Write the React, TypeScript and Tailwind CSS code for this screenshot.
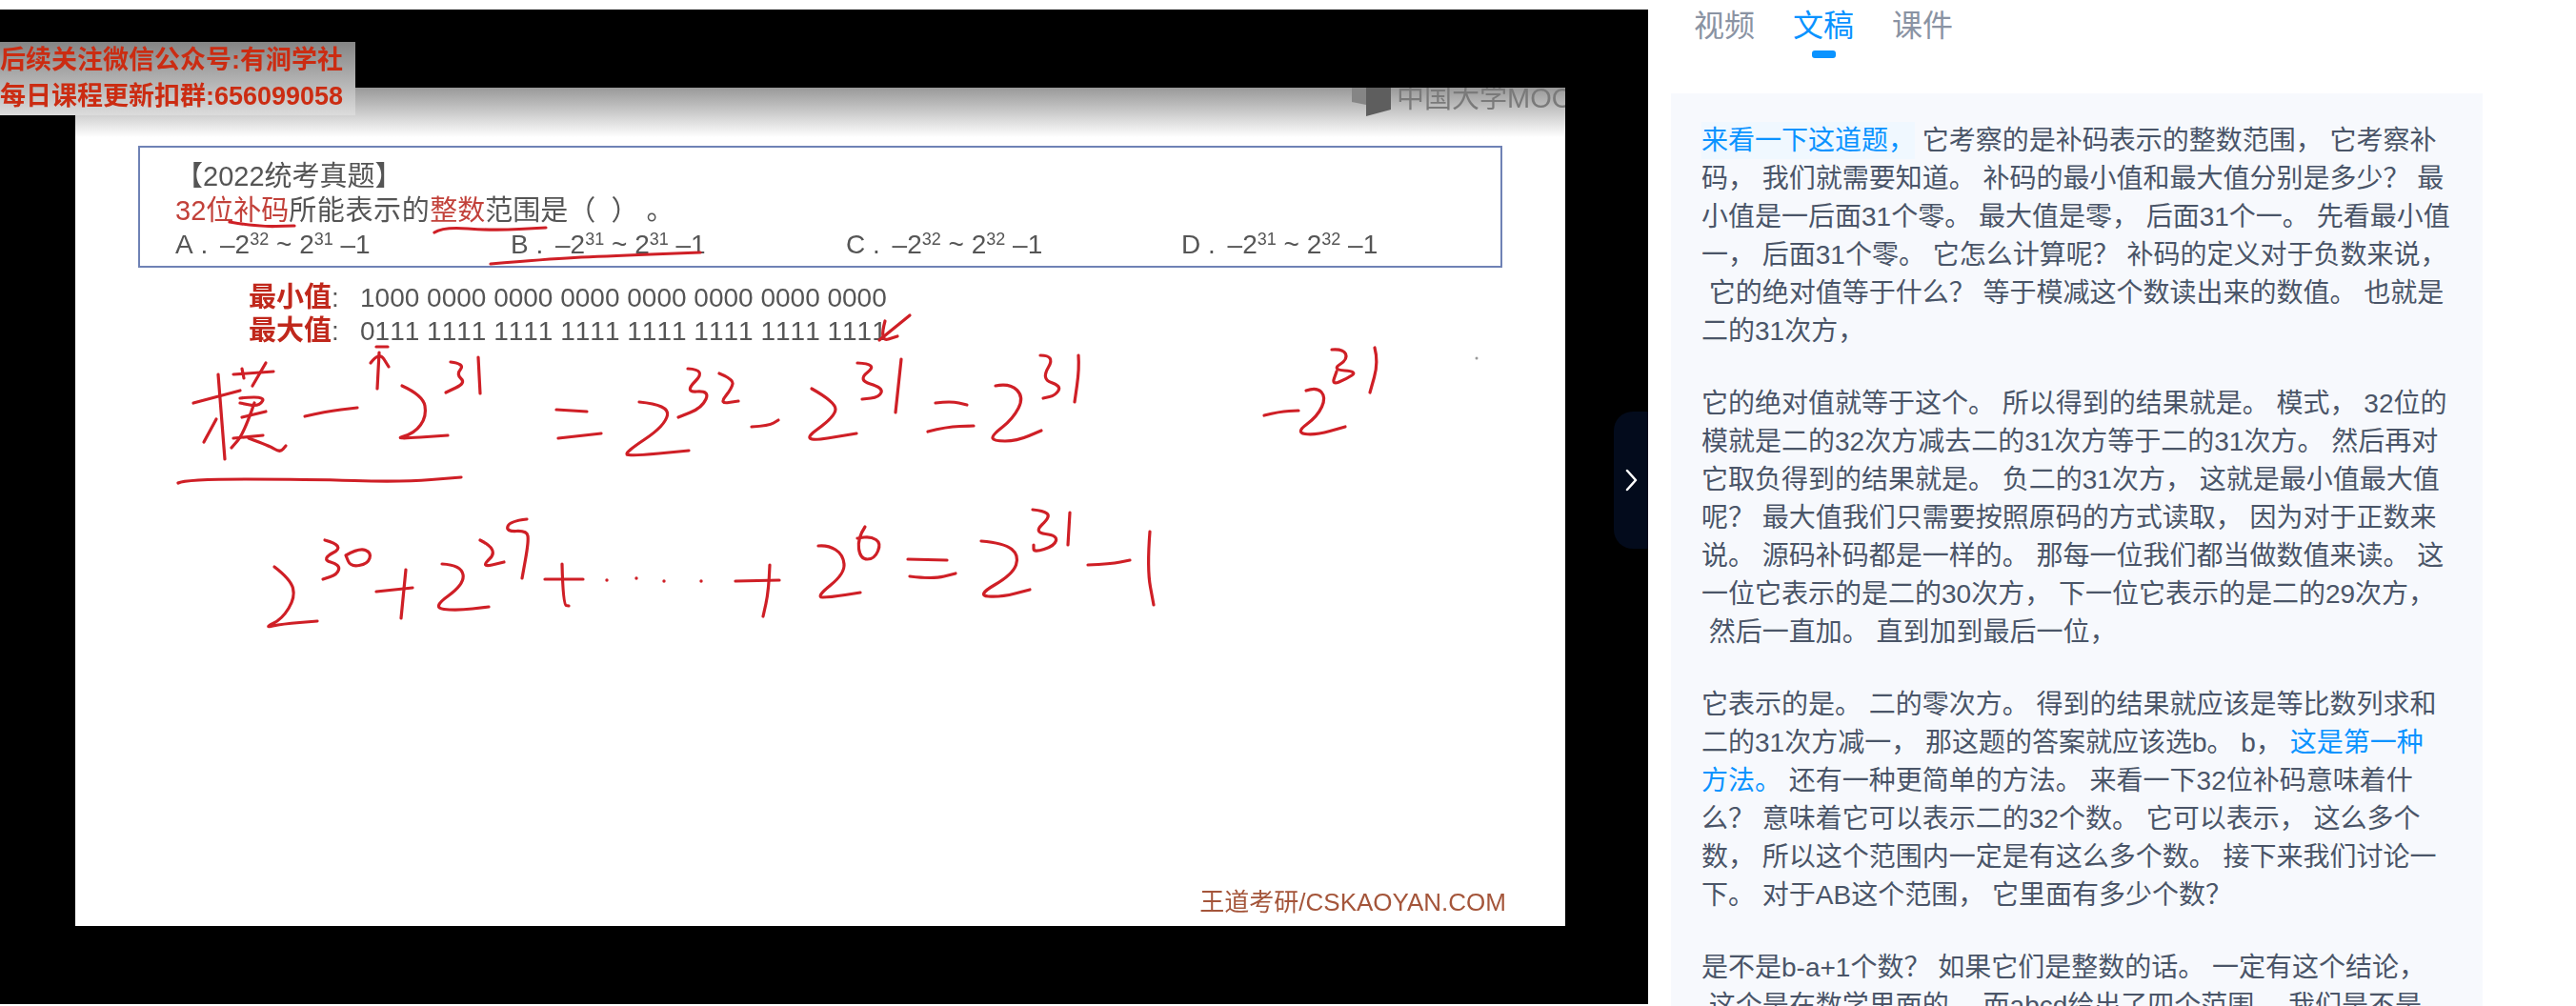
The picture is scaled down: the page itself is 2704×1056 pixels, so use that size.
import React from "react";

type P = [number, number];

const smooth = (pts: P[]): string => {
  if (pts.length < 3) return `M${pts.map((p) => p.join(" ")).join(" L")}`;
  let d = `M${pts[0][0]} ${pts[0][1]}`;
  for (let i = 1; i < pts.length - 1; i++) {
    const mx = (pts[i][0] + pts[i + 1][0]) / 2;
    const my = (pts[i][1] + pts[i + 1][1]) / 2;
    d += ` Q${pts[i][0]} ${pts[i][1]} ${mx} ${my}`;
  }
  const l = pts[pts.length - 1];
  return d + ` L${l[0]} ${l[1]}`;
};

const strokes: P[][] = [
  // underlines in the question
  [[241, 233], [270, 238], [309, 237]],
  [[456, 244], [465, 238], [517, 242], [573, 239]],
  [[515, 277], [574, 272], [631, 269], [735, 265]],
  // 模
  [[203, 423], [252, 410]],
  [[229, 393], [236, 482]],
  [[227, 440], [214, 464]],
  [[245, 393], [287, 390]],
  [[279, 381], [265, 405]],
  [[254, 387], [256, 397]],
  [[252, 418], [279, 415], [272, 427], [252, 423]],
  [[254, 438], [279, 432]],
  [[267, 423], [256, 455], [243, 470]],
  [[245, 460], [276, 457]],
  [[261, 460], [283, 468], [294, 475], [300, 468]],
  // - 2^31
  [[320, 437], [341, 432], [375, 428]],
  [[396, 408], [398, 370]],
  [[389, 381], [398, 369], [408, 385]],
  [[395, 364], [407, 364]],
  [[422, 405], [444, 415], [448, 437], [435, 455], [412, 461], [470, 457]],
  [[473, 380], [488, 382], [479, 393], [489, 402], [468, 412]],
  [[502, 375], [504, 413]],
  [[187, 507], [194, 503], [323, 503], [421, 506], [484, 501]],
  // = 2^32
  [[584, 430], [616, 432]],
  [[586, 460], [631, 455]],
  [[671, 422], [703, 425], [698, 447], [656, 475], [660, 479], [723, 473]],
  [[722, 387], [742, 388], [718, 412], [745, 410], [737, 428], [712, 438]],
  [[755, 392], [770, 398], [768, 408], [755, 424], [775, 421]],
  // - 2^31
  [[789, 448], [807, 447], [817, 441]],
  [[852, 408], [877, 422], [877, 437], [838, 465], [899, 455]],
  [[900, 381], [922, 382], [900, 399], [927, 407], [923, 417], [905, 419]],
  [[946, 377], [940, 433]],
  // = 2^31
  [[982, 423], [998, 421], [1015, 425]],
  [[974, 453], [993, 448], [1022, 447]],
  [[1045, 405], [1060, 402], [1075, 417], [1063, 440], [1041, 457], [1043, 463], [1067, 463], [1093, 452]],
  [[1092, 373], [1108, 373], [1093, 398], [1114, 405], [1108, 415], [1095, 418]],
  [[1132, 373], [1133, 387], [1128, 422]],
  // -2^31
  [[1327, 436], [1343, 432], [1363, 431]],
  [[1371, 410], [1382, 406], [1392, 417], [1383, 437], [1360, 454], [1380, 457], [1412, 448]],
  [[1398, 367], [1410, 366], [1415, 377], [1398, 388], [1425, 390], [1413, 398], [1398, 404], [1403, 390]],
  [[1443, 365], [1447, 380], [1438, 412]],
  // arrow beside the max value
  [[955, 331], [923, 357]],
  [[929, 337], [923, 359], [942, 353]],
  // 2^30
  [[288, 595], [305, 608], [310, 627], [296, 650], [277, 659], [296, 655], [333, 652]],
  [[341, 567], [363, 573], [337, 587], [357, 593], [354, 603], [339, 608]],
  [[363, 583], [377, 575], [390, 580], [386, 592], [368, 595], [363, 583]],
  [[395, 621], [433, 617]],
  [[426, 598], [421, 649]],
  // 2^29
  [[464, 592], [484, 593], [488, 613], [453, 638], [479, 641], [513, 637]],
  [[504, 567], [524, 577], [504, 596], [529, 590]],
  [[553, 545], [535, 547], [531, 558], [553, 557], [555, 568], [548, 607]],
  // + ... +
  [[572, 608], [612, 608]],
  [[590, 592], [591, 635], [597, 636]],
  [[772, 610], [818, 609]],
  [[808, 593], [807, 620], [801, 647]],
  // 2^0
  [[859, 573], [869, 572], [885, 582], [887, 602], [856, 627], [871, 627], [903, 622]],
  [[908, 553], [900, 565], [903, 587], [918, 587], [925, 570], [914, 563], [900, 565]],
  // = 2^31 - 1
  [[953, 587], [994, 588]],
  [[955, 605], [979, 608], [1003, 602]],
  [[1030, 568], [1054, 570], [1070, 583], [1063, 603], [1025, 625], [1050, 627], [1081, 619]],
  [[1084, 535], [1095, 536], [1103, 542], [1085, 559], [1110, 562], [1107, 573], [1085, 580], [1085, 572]],
  [[1123, 538], [1121, 572]],
  [[1142, 593], [1166, 592], [1186, 588]],
  [[1207, 558], [1204, 597], [1211, 635]],
];

const dots: P[] = [[637, 609], [668, 607], [697, 610], [736, 610]];

const Sup = ({ children }: { children: React.ReactNode }) => (
  <span className="relative top-[-9px] text-[18px]">{children}</span>
);

const Option = ({ label, a, b }: { label: string; a: string; b: string }) => (
  <div className="w-[352px] shrink-0 whitespace-pre [font-kerning:none]">
    {label} .<span className="ml-[5px]"> </span>–2<Sup>{a}</Sup> ~ 2<Sup>{b}</Sup> –1
  </div>
);

const Blue = ({ children, bg }: { children: React.ReactNode; bg?: boolean }) => (
  <span className={bg ? "bg-[#f0f8ff] py-1 text-[#0a93ff]" : "text-[#0a93ff]"}>{children}</span>
);

const paragraphs: React.ReactNode[][] = [
  [
    <><Blue bg>来看一下这道题，</Blue> 它考察的是补码表示的整数范围， 它考察补</>,
    "码， 我们就需要知道。 补码的最小值和最大值分别是多少？ 最",
    "小值是一后面31个零。 最大值是零， 后面31个一。 先看最小值",
    "一， 后面31个零。 它怎么计算呢？ 补码的定义对于负数来说，",
    " 它的绝对值等于什么？ 等于模减这个数读出来的数值。 也就是",
    "二的31次方，",
  ],
  [
    "它的绝对值就等于这个。 所以得到的结果就是。 模式， 32位的",
    "模就是二的32次方减去二的31次方等于二的31次方。 然后再对",
    "它取负得到的结果就是。 负二的31次方， 这就是最小值最大值",
    "呢？ 最大值我们只需要按照原码的方式读取， 因为对于正数来",
    "说。 源码补码都是一样的。 那每一位我们都当做数值来读。 这",
    "一位它表示的是二的30次方， 下一位它表示的是二的29次方，",
    " 然后一直加。 直到加到最后一位，",
  ],
  [
    "它表示的是。 二的零次方。 得到的结果就应该是等比数列求和",
    <>二的31次方减一， 那这题的答案就应该选b。 b， <Blue>这是第一种</Blue></>,
    <><Blue>方法。</Blue> 还有一种更简单的方法。 来看一下32位补码意味着什</>,
    "么？ 意味着它可以表示二的32个数。 它可以表示， 这么多个",
    "数， 所以这个范围内一定是有这么多个数。 接下来我们讨论一",
    "下。 对于AB这个范围， 它里面有多少个数？",
  ],
  [
    "是不是b-a+1个数？ 如果它们是整数的话。 一定有这个结论，",
    " 这个是在数学里面的， 而abcd给出了四个范围， 我们是不是",
  ],
];

const Slide = () => (
  <div className="relative ml-[79px] mt-[82px] flex h-[880px] w-[1564px] flex-col overflow-hidden bg-white text-[#555] blur-[0.6px]">
    <div className="absolute inset-x-0 top-0 h-[52px] bg-gradient-to-b from-[#999999] to-white" />
    <div className="absolute right-0 top-0 flex h-[30px] w-[224px] items-start overflow-hidden text-[#7a7a7a]">
      <svg width="46" height="30" viewBox="0 0 46 30" className="shrink-0">
        <polygon points="0,0 15,0 15,18 0,15" fill="#858585" />
        <polygon points="15,0 41,0 41,23 15,30" fill="#5e5e5e" />
      </svg>
      <span className="mt-[-4px] whitespace-nowrap pl-[1px] text-[29px] leading-[30px]">中国大学MOOC</span>
    </div>

    <div className="relative ml-[66px] mt-[61px] h-[128px] w-[1432px] border-2 border-[#6f82b5] pl-[37px] pt-[12px] text-[29px] leading-[36px]">
      <div>【2022统考真题】</div>
      <div className="whitespace-pre">
        <span className="text-[#c2413a]">32位补码</span>
        <span className="tracking-[0.6px]">所能表示的</span>
        <span className="text-[#c2413a]">整数</span>范围是（  ） 。
      </div>
      <div className="flex text-[28px]">
        <Option label="A" a="32" b="31" />
        <Option label="B" a="31" b="31" />
        <Option label="C" a="32" b="32" />
        <Option label="D" a="31" b="32" />
      </div>
    </div>

    <div className="relative ml-[182px] mt-[14px] text-[28px] leading-[35px] [font-kerning:none]">
      <div className="flex whitespace-pre">
        <div className="w-[117px]"><span className="text-[29px] font-bold text-[#c0281c]">最小值</span>:</div>
        <div>1000 0000 0000 0000 0000 0000 0000 0000</div>
      </div>
      <div className="flex whitespace-pre">
        <div className="w-[117px]"><span className="text-[29px] font-bold text-[#c0281c]">最大值</span>:</div>
        <div>0111 1111 1111 1111 1111 1111 1111 1111</div>
      </div>
    </div>

    <div className="relative mb-[10px] mr-[62px] mt-auto self-end whitespace-nowrap text-[26px] leading-[30px] text-[#a4553a]">
      王道考研/CSKAOYAN.COM
    </div>
  </div>
);

const Handwriting = () => (
  <svg
    className="pointer-events-none absolute left-0 top-[-10px] blur-[0.4px]"
    width="1730"
    height="1056"
    viewBox="0 0 1730 1056"
    fill="none"
    stroke="#cf1f26"
    strokeWidth="3.2"
    strokeLinecap="round"
    strokeLinejoin="round"
  >
    {strokes.map((s, i) => (
      <path key={i} d={smooth(s)} />
    ))}
    {dots.map(([x, y], i) => (
      <circle key={i} cx={x} cy={y} r="1.7" fill="#cf1f26" stroke="none" />
    ))}
    <circle cx="1550" cy="376" r="1.5" fill="#999999" stroke="none" />
  </svg>
);

export default function App() {
  return (
    <div
      className="flex h-[1056px] w-[2704px] overflow-hidden bg-white"
      style={{ fontFamily: '"Liberation Sans", "Noto Sans CJK SC", sans-serif' }}
    >
      <div className="w-[1730px] shrink-0 pt-[10px]">
        <div className="relative h-[1044px] overflow-hidden bg-black">
          <Slide />
          <Handwriting />
          <div className="absolute left-0 top-[34px] h-[77px] w-[373px] overflow-hidden whitespace-nowrap bg-gradient-to-b from-[#858585] to-[#dcdcdc] text-[27px] font-bold leading-[38px] text-[#cb2c12] blur-[0.5px]">
            <div>后续关注微信公众号:有涧学社</div>
            <div>每日课程更新扣群:656099058</div>
          </div>
          <div className="absolute right-0 top-[422px] flex h-[144px] w-[36px] items-center justify-center rounded-l-[20px] bg-[#030b1c]">
            <svg width="16" height="24" viewBox="0 0 16 24" fill="none" stroke="#ffffff" strokeWidth="2.5" strokeLinecap="round" strokeLinejoin="round">
              <polyline points="4,2 13,12 4,22" />
            </svg>
          </div>
        </div>
      </div>

      <div className="flex h-[1056px] w-[974px] flex-col overflow-hidden pl-[24px]">
        <div className="flex gap-10 pl-[24px] pt-[7px] text-[32px] leading-[40px] text-[#8a93a3]">
          <div>视频</div>
          <div className="flex flex-col items-center text-[#0a93ff]">
            文稿
            <div className="mt-[6px] h-[8px] w-[25px] rounded-[3px] bg-[#0a93ff]" />
          </div>
          <div>课件</div>
        </div>
        <div className="mt-[37px] w-[852px] flex-1 overflow-hidden bg-[#f7f9fd] px-8 pt-[30px] text-[28px] leading-[40px] text-[#4a5568]">
          {paragraphs.map((lines, i) => (
            <div key={i} className="mb-[36px]">
              {lines.map((l, j) => (
                <div key={j} className="whitespace-pre">
                  {l}
                </div>
              ))}
            </div>
          ))}
        </div>
      </div>
    </div>
  );
}
